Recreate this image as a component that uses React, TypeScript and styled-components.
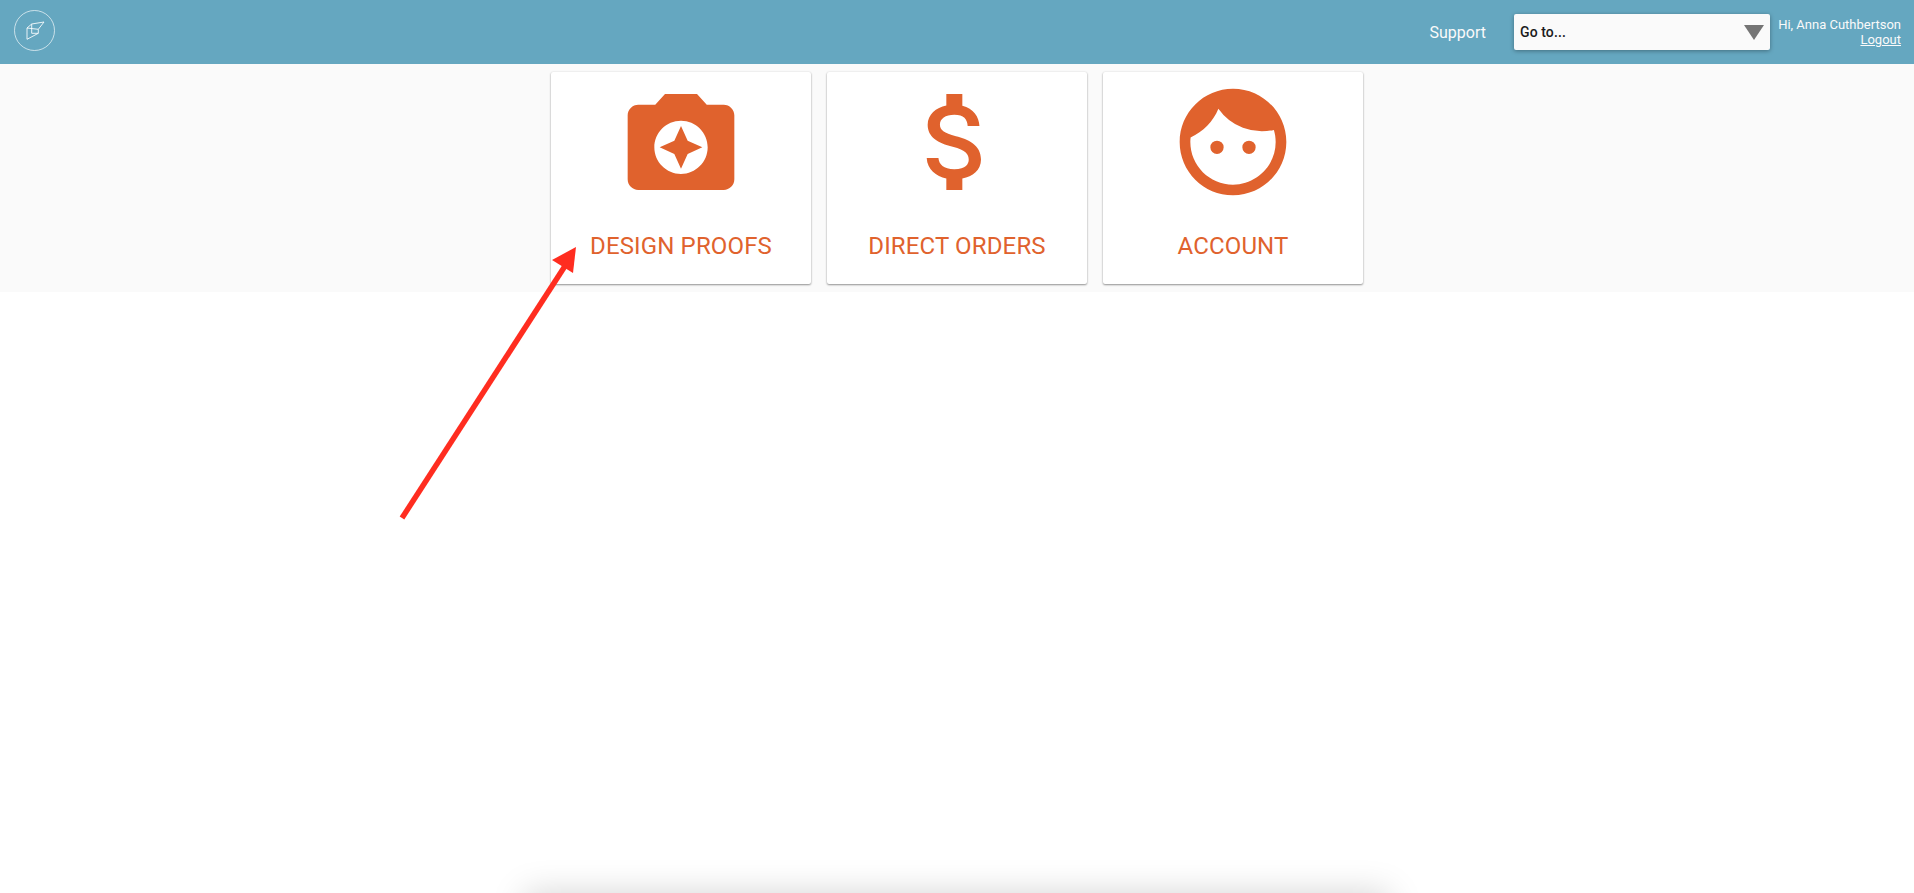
import React from "react";
import styled, { createGlobalStyle } from "styled-components";
import { MdCameraEnhance, MdAttachMoney, MdFace } from "react-icons/md";

const Global = createGlobalStyle`
  html, body { margin: 0; padding: 0; height: 100%; overflow: hidden; background: #fff; }
  body { font-family: Roboto, "Liberation Sans", sans-serif; }
`;

const Page = styled.div`
  position: relative;
  height: 893px;
  overflow: hidden;
  background: #fff;
`;

const Header = styled.header`
  height: 64px;
  background: #65a7c0;
  display: flex;
  align-items: center;
  color: #fafafa;
`;

const Logo = styled.a`
  width: 41px;
  height: 41px;
  margin: -4px 0 0 14px;
  border: 1px solid rgba(255, 255, 255, 0.65);
  box-sizing: border-box;
  border-radius: 50%;
  display: flex;
  align-items: center;
  justify-content: center;
`;

const Spacer = styled.div`
  flex: 1;
`;

const Support = styled.a`
  font-size: 16px;
  font-weight: 400;
  margin-right: 28px;
`;

const Select = styled.div`
  width: 256px;
  height: 36px;
  box-sizing: border-box;
  padding: 0 6px;
  background: #fafafa;
  border-radius: 2px;
  box-shadow: 0 1px 4px rgba(0, 0, 0, 0.35);
  display: flex;
  align-items: center;
  justify-content: space-between;
  color: #1c1c1c;
  font-size: 14px;
  font-weight: 500;
  letter-spacing: 0.1px;
`;

const Caret = styled.span`
  width: 0;
  height: 0;
  border-left: 10px solid transparent;
  border-right: 10px solid transparent;
  border-top: 15px solid #757575;
`;

const User = styled.div`
  width: 123px;
  margin: 0 13px 0 8px;
  text-align: right;
  font-size: 13px;
  font-weight: 400;
  line-height: 15px;
  white-space: nowrap;
  display: flex;
  flex-direction: column;
  align-items: flex-end;
`;

const Logout = styled.a`
  text-decoration: underline;
`;

const Strip = styled.section`
  height: 228px;
  background: #fafafa;
  display: flex;
  justify-content: center;
  gap: 16px;
  padding-top: 8px;
  box-sizing: border-box;
`;

const Card = styled.a`
  width: 260px;
  height: 212px;
  background: #fff;
  border-radius: 2px;
  box-shadow: 0 1px 2px rgba(0, 0, 0, 0.4), 0 0 2px rgba(0, 0, 0, 0.1);
  color: #e0622d;
  display: flex;
  flex-direction: column;
  align-items: center;
  padding-top: 6px;
  box-sizing: border-box;
`;

const CardLabel = styled.span`
  margin-top: 23px;
  font-size: 24px;
  line-height: 34px;
  font-weight: 400;
  letter-spacing: 0.15px;
`;

const Arrow = styled.svg`
  position: absolute;
  left: 0;
  top: 0;
  pointer-events: none;
`;

const Dialog = styled.div`
  position: absolute;
  left: 525px;
  top: 893px;
  width: 864px;
  height: 200px;
  background: #fff;
  box-shadow: 0 0 32px rgba(0, 0, 0, 0.17);
`;

const cards = [
  { label: "DESIGN PROOFS", Icon: MdCameraEnhance },
  { label: "DIRECT ORDERS", Icon: MdAttachMoney },
  { label: "ACCOUNT", Icon: MdFace },
];

export default function App() {
  return (
    <Page>
      <Global />
      <Header>
        <Logo>
          <svg width="20" height="20" viewBox="0 0 20 20" fill="none" stroke="#fff" strokeOpacity="0.85" strokeWidth="1">
            <path d="M2 8 L6.7 4 L19 2 L13.3 9.3 L13.3 13.3 L2 19.3 Z" />
            <path d="M2 8 L13.3 9.3 M6.7 4 L6.7 13.3 L13.3 13.3" />
          </svg>
        </Logo>
        <Spacer />
        <Support>Support</Support>
        <Select>
          Go to...
          <Caret />
        </Select>
        <User>
          <span>Hi, Anna Cuthbertson</span>
          <Logout>Logout</Logout>
        </User>
      </Header>
      <Strip>
        {cards.map(({ label, Icon }) => (
          <Card key={label}>
            <Icon size={128} />
            <CardLabel>{label}</CardLabel>
          </Card>
        ))}
      </Strip>
      <Dialog />
      <Arrow width="1914" height="893" viewBox="0 0 1914 893">
        <line x1="402" y1="518" x2="565" y2="266" stroke="#ff2d20" strokeWidth="5.5" />
        <polygon points="576,247 573,273 552,260" fill="#ff2d20" />
      </Arrow>
    </Page>
  );
}
